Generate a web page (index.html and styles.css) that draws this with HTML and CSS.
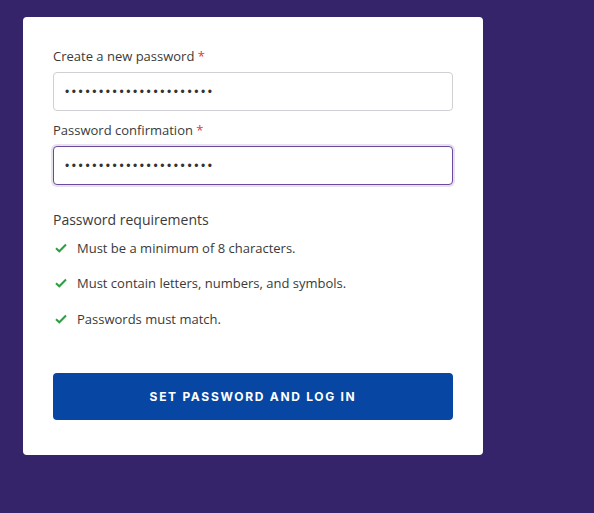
FILE: index.html
```html
<!DOCTYPE html>
<html>
<head>
<meta charset="utf-8">
<link rel="stylesheet" href="styles.css">
</head>
<body>
<div class="page">
  <form class="card">
    <div class="field">
      <label class="label">Create a new password <span class="req">*</span></label>
      <input class="input" type="password" value="abcdefghijklmnopqrstuv">
    </div>
    <div class="field">
      <label class="label">Password confirmation <span class="req">*</span></label>
      <input class="input focused" type="password" value="abcdefghijklmnopqrstuv">
    </div>
    <div class="reqs">
      <div class="reqs-title">Password requirements</div>
      <ul class="reqs-list">
        <li class="req-item"><svg class="check" viewBox="0 0 12 10" width="12" height="10"><path d="M1 5.2 L4.3 8.3 L11 1.5" fill="none" stroke="#2e9e44" stroke-width="2"/></svg><span>Must be a minimum of 8 characters.</span></li>
        <li class="req-item"><svg class="check" viewBox="0 0 12 10" width="12" height="10"><path d="M1 5.2 L4.3 8.3 L11 1.5" fill="none" stroke="#2e9e44" stroke-width="2"/></svg><span>Must contain letters, numbers, and symbols.</span></li>
        <li class="req-item"><svg class="check" viewBox="0 0 12 10" width="12" height="10"><path d="M1 5.2 L4.3 8.3 L11 1.5" fill="none" stroke="#2e9e44" stroke-width="2"/></svg><span>Passwords must match.</span></li>
      </ul>
    </div>
    <button class="btn" type="button">SET PASSWORD AND LOG IN</button>
  </form>
</div>
</body>
</html>
```
FILE: styles.css
```css
html, body {
  margin: 0;
  padding: 0;
  background: #35246a;
}
body {
  font-family: "Open Sans", "Liberation Sans", sans-serif;
  color: #333;
}
.page {
  padding: 17px 0 0 23px;
  height: 513px;
  box-sizing: border-box;
}
.card {
  width: 460px;
  height: 438px;
  box-sizing: border-box;
  background: #fff;
  border-radius: 4px;
  padding: 30px 30px 0 30px;
  display: flex;
  flex-direction: column;
}
.field {
  display: flex;
  flex-direction: column;
  margin-bottom: 10px;
}
.label {
  font-size: 13px;
  color: #3a3a3a;
  line-height: 18px;
  margin-bottom: 7px;
}
.req {
  color: #e0373c;
}
.input {
  width: 400px;
  height: 39px;
  box-sizing: border-box;
  border: 1px solid #cfcfd4;
  border-radius: 4px;
  padding: 0 11px;
  font-family: "Liberation Sans", sans-serif;
  font-size: 12px;
  letter-spacing: 2.6px;
  color: #333;
  outline: none;
  margin: 0;
}
.input.focused {
  border-color: #6a4a9c;
  box-shadow: 0 0 0 2px #e6e0ef;
}
.reqs {
  margin-top: 15px;
}
.reqs-title {
  font-size: 14px;
  color: #3a3a3a;
  line-height: 20px;
  margin-bottom: 9px;
}
.reqs-list {
  list-style: none;
  margin: 0;
  padding: 0;
  display: flex;
  flex-direction: column;
  gap: 17.3px;
}
.req-item {
  display: flex;
  align-items: center;
  gap: 10px;
  font-size: 13px;
  line-height: 18px;
  color: #3a3a3a;
  padding-left: 2px;
}
.check {
  flex: none;
}
.btn {
  margin-top: 45px;
  width: 400px;
  height: 47px;
  border: none;
  border-radius: 4px;
  background: #0747a3;
  color: #fff;
  font-family: "Inter", "Liberation Sans", sans-serif;
  font-weight: 700;
  font-size: 12px;
  letter-spacing: 1.7px;
}
```
